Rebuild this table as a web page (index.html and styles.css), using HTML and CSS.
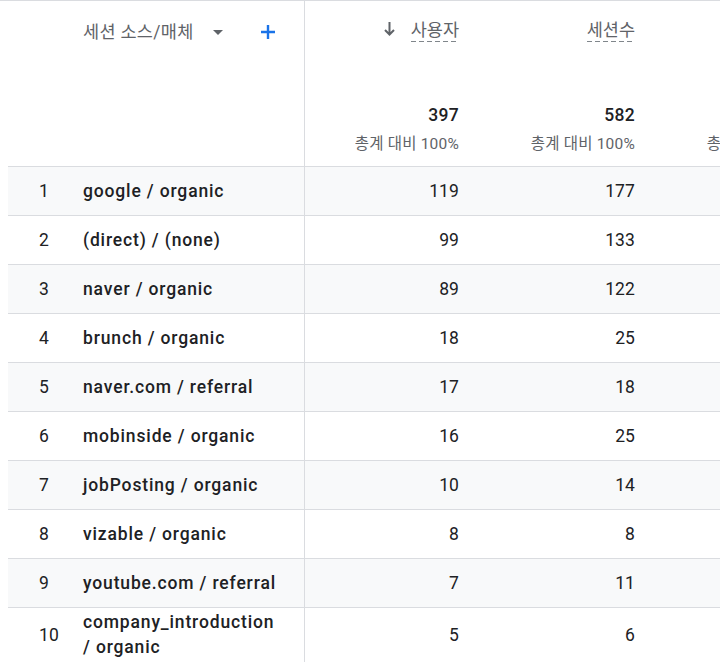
FILE: index.html
```html
<!DOCTYPE html>
<html lang="ko">
<head>
<meta charset="utf-8">
<link rel="stylesheet" href="styles.css">
</head>
<body>
<div class="page">
  <div class="table">
    <div class="row head">
      <div class="cell rank"></div>
      <div class="cell dim">
        <div class="dim-title">
          <span class="dim-label">세션 소스/매체</span>
          <svg class="caret" width="10" height="5" viewBox="0 0 10 5"><path d="M0 0h10L5 5z" fill="#5f6368"/></svg>
          <svg class="plus" width="16" height="16" viewBox="0 0 16 16"><path d="M8 1v14M1 8h14" stroke="#1a73e8" stroke-width="2.4"/></svg>
        </div>
      </div>
      <div class="cell metric">
        <div class="m-title">
          <svg class="sort" width="11" height="14" viewBox="0 0 11 14"><path d="M5.5 0v12.5M1 8l4.5 4.5L10 8" stroke="#5f6368" stroke-width="2" fill="none"/></svg>
          <span class="m-label">사용자</span>
        </div>
        <div class="total">397</div>
        <div class="pct">총계 대비 100%</div>
      </div>
      <div class="cell metric">
        <div class="m-title"><span class="m-label">세션수</span></div>
        <div class="total">582</div>
        <div class="pct">총계 대비 100%</div>
      </div>
      <div class="cell metric">
        <div class="m-title"></div>
        <div class="total">&nbsp;</div>
        <div class="pct">총계 대비 100%</div>
      </div>
    </div>

    <div class="row alt"><div class="cell rank">1</div><div class="cell dim name">google / organic</div><div class="cell num">119</div><div class="cell num">177</div><div class="cell num"></div></div>
    <div class="row"><div class="cell rank">2</div><div class="cell dim name">(direct) / (none)</div><div class="cell num">99</div><div class="cell num">133</div><div class="cell num"></div></div>
    <div class="row alt"><div class="cell rank">3</div><div class="cell dim name">naver / organic</div><div class="cell num">89</div><div class="cell num">122</div><div class="cell num"></div></div>
    <div class="row"><div class="cell rank">4</div><div class="cell dim name">brunch / organic</div><div class="cell num">18</div><div class="cell num">25</div><div class="cell num"></div></div>
    <div class="row alt"><div class="cell rank">5</div><div class="cell dim name">naver.com / referral</div><div class="cell num">17</div><div class="cell num">18</div><div class="cell num"></div></div>
    <div class="row"><div class="cell rank">6</div><div class="cell dim name">mobinside / organic</div><div class="cell num">16</div><div class="cell num">25</div><div class="cell num"></div></div>
    <div class="row alt"><div class="cell rank">7</div><div class="cell dim name">jobPosting / organic</div><div class="cell num">10</div><div class="cell num">14</div><div class="cell num"></div></div>
    <div class="row"><div class="cell rank">8</div><div class="cell dim name">vizable / organic</div><div class="cell num">8</div><div class="cell num">8</div><div class="cell num"></div></div>
    <div class="row alt"><div class="cell rank">9</div><div class="cell dim name">youtube.com / referral</div><div class="cell num">7</div><div class="cell num">11</div><div class="cell num"></div></div>
    <div class="row"><div class="cell rank">10</div><div class="cell dim name">company_introduction / organic</div><div class="cell num">5</div><div class="cell num">6</div><div class="cell num"></div></div>
  </div>
</div>
</body>
</html>
```

FILE: styles.css
```css
html, body {
  margin: 0;
  padding: 0;
  background: #ffffff;
}
body {
  font-family: Roboto, "Noto Sans CJK KR", sans-serif;
  color: #202124;
  overflow: hidden;
}
.page {
  width: 720px;
  height: 662px;
  overflow: hidden;
  border-top: 1px solid #dadce0;
  box-sizing: border-box;
}
.table {
  margin-left: 8px;
  width: 900px;
}
.row {
  display: grid;
  grid-template-columns: 67px 230px 170px 176px 176px;
  border-bottom: 1px solid #dadce0;
  min-height: 48px;
}
.row.alt {
  background: #f8f9fa;
}
.cell {
  box-sizing: border-box;
  display: flex;
  align-items: center;
  font-size: 17.5px;
  line-height: 25px;
  padding: 2px 0;
  letter-spacing: 0.1px;
}
.rank {
  padding-left: 31px;
  font-weight: 400;
}
.dim {
  padding-left: 8px;
  padding-right: 24px;
  border-right: 1px solid #dadce0;
}
.name {
  font-weight: 500;
  letter-spacing: 0.85px;
}
.num {
  justify-content: flex-end;
  padding-right: 16px;
}

/* header */
.head {
  height: 165px;
}
.head .cell {
  align-items: stretch;
  padding: 0;
  letter-spacing: 0;
}
.head .dim {
  flex-direction: column;
  padding: 19px 16px 0 8px;
}
.dim-title {
  display: flex;
  align-items: center;
  height: 24px;
}
.dim-label {
  font-size: 17.5px;
  color: #5f6368;
  line-height: 24px;
  letter-spacing: 0.3px;
}
.caret {
  margin-left: 19px;
}
.plus {
  margin-left: 37px;
}
.head .metric {
  flex-direction: column;
  align-items: flex-end;
  padding: 19px 16px 12px 0;
}
.m-title {
  display: flex;
  align-items: flex-start;
  height: 24px;
  flex: 1;
}
.sort {
  margin-top: 2px;
  margin-right: 16px;
}
.m-label {
  display: inline-block;
  font-size: 17.5px;
  line-height: 21px;
  color: #5f6368;
  padding-bottom: 1px;
  background-image: repeating-linear-gradient(to right, #80868b 0 5px, transparent 5px 8px);
  background-size: 100% 1px;
  background-repeat: no-repeat;
  background-position: left bottom;
}
.total {
  font-size: 17.5px;
  font-weight: 500;
  line-height: 24px;
  margin-bottom: 7px;
  letter-spacing: 0.3px;
}
.pct {
  font-size: 15.5px;
  line-height: 20px;
  color: #5f6368;
  letter-spacing: 0.2px;
}
```
